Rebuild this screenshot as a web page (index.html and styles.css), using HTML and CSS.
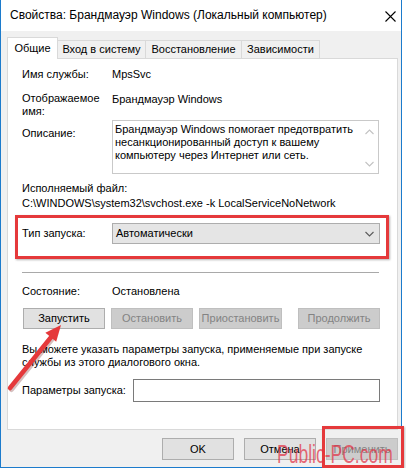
FILE: index.html
```html
<!DOCTYPE html>
<html lang="ru">
<head>
<meta charset="utf-8">
<title>Свойства: Брандмауэр Windows</title>
<link rel="stylesheet" href="styles.css">
</head>
<body>
<div class="stage">
  <div class="window">
    <div class="titlebar">
      <span class="title">Свойства: Брандмауэр Windows (Локальный компьютер)</span>
      <svg class="close" width="11" height="11" viewBox="0 0 11 11"><path d="M0.5 0.5 L10.5 10.5 M10.5 0.5 L0.5 10.5" stroke="#000" stroke-width="1.1" fill="none"/></svg>
    </div>
    <div class="client">
      <div class="tabs">
        <div class="tab active">Общие</div>
        <div class="tab t2">Вход в систему</div>
        <div class="tab t3">Восстановление</div>
        <div class="tab t4">Зависимости</div>
      </div>
      <div class="panel">
        <div class="row r-name">
          <div class="label">Имя службы:</div>
          <div class="value">MpsSvc</div>
        </div>
        <div class="row r-disp">
          <div class="label">Отображаемое<br>имя:</div>
          <div class="value v-disp">Брандмауэр Windows</div>
        </div>
        <div class="row r-desc">
          <div class="label l-desc">Описание:</div>
          <div class="descbox">
            <div class="desctext">Брандмауэр Windows помогает предотвратить<br>несанкционированный доступ к вашему<br>компьютеру через Интернет или сеть.</div>
            <div class="scroll">
              <svg width="9" height="6" viewBox="0 0 9 6"><path d="M0.5 5 L4.5 1 L8.5 5" stroke="#c2c2c2" stroke-width="1.1" fill="none"/></svg>
              <svg width="9" height="6" viewBox="0 0 9 6"><path d="M0.5 1 L4.5 5 L8.5 1" stroke="#c2c2c2" stroke-width="1.1" fill="none"/></svg>
            </div>
          </div>
        </div>
        <div class="exe-label">Исполняемый файл:</div>
        <div class="exe-path">C:\WINDOWS\system32\svchost.exe -k LocalServiceNoNetwork</div>
        <div class="highlight">
          <div class="row r-type">
            <div class="label">Тип запуска:</div>
            <div class="select">
              <span>Автоматически</span>
              <svg width="9" height="6" viewBox="0 0 9 6"><path d="M0.5 1 L4.5 5 L8.5 1" stroke="#5a5a5a" stroke-width="1.1" fill="none"/></svg>
            </div>
          </div>
        </div>
        <div class="sep"></div>
        <div class="row r-state">
          <div class="label">Состояние:</div>
          <div class="value">Остановлена</div>
        </div>
        <div class="btnrow">
          <div class="btn">Запустить</div>
          <div class="btn disabled">Остановить</div>
          <div class="btn disabled wide">Приостановить</div>
          <div class="btn disabled last">Продолжить</div>
        </div>
        <p class="hint">Вы можете указать параметры запуска, применяемые при запуске<br>службы из этого диалогового окна.</p>
        <div class="row r-params">
          <div class="label l-params">Параметры запуска:</div>
          <div class="input"></div>
        </div>
      </div>
      <div class="footer">
        <div class="btn fbtn">OK</div>
        <div class="btn fbtn">Отмена</div>
        <div class="btn fbtn disabled">Применить</div>
      </div>
    </div>
  </div>

  <svg class="arrow" width="406" height="468" viewBox="0 0 406 468">
    <line x1="10" y1="388" x2="52" y2="336" stroke="rgba(90,0,0,0.25)" stroke-width="5" stroke-linecap="round" transform="translate(1.5,1.5)"/>
    <line x1="10" y1="388" x2="52" y2="336" stroke="#e5393b" stroke-width="4.5" stroke-linecap="round"/>
    <polygon points="61,325 45.4,332.8 56.2,341.8" fill="#e5393b"/>
  </svg>
  <div class="applybox"></div>
  <div class="watermark">Public-PC.com</div>
</div>
</body>
</html>
```

FILE: styles.css
```css
html, body {
  margin: 0;
  padding: 0;
  overflow: hidden;
  background: #ffffff;
}

.stage {
  position: relative;
  width: 406px;
  height: 468px;
  font-family: "Liberation Sans", Arial, sans-serif;
  font-size: 11px;
  line-height: 13px;
  color: #000;
}

.window {
  width: 402px;
  height: 468px;
  box-sizing: border-box;
  border: 1px solid #1c7bcc;
  border-top: none;
  background: #f0f0f0;
  display: flex;
  flex-direction: column;
}

.titlebar {
  height: 31px;
  flex: none;
  background: #ffffff;
  display: flex;
  align-items: center;
  justify-content: space-between;
  padding: 0 5px 0 9px;
}

.title {
  font-size: 12px;
  color: #000;
}

.close {
  display: block;
  margin-top: 1px;
}

.client {
  flex: 1;
  padding: 6px 3px 0 6px;
}

.tabs {
  display: flex;
  align-items: flex-end;
  height: 21px;
}

.tab {
  box-sizing: border-box;
  height: 18px;
  border: 1px solid #d9d9d9;
  border-bottom: none;
  background: #f0f0f0;
  text-align: center;
  line-height: 17px;
  margin-left: -1px;
}

.tab.active {
  position: relative;
  z-index: 1;
  height: 22px;
  margin-left: 0;
  margin-bottom: -1px;
  width: 51px;
  background: #ffffff;
  line-height: 20px;
}

.tab.t2 { width: 89px; }
.tab.t3 { width: 97px; }
.tab.t4 { width: 79px; }

.panel {
  box-sizing: border-box;
  width: 391px;
  height: 372px;
  border: 1px solid #d9d9d9;
  background: #ffffff;
  padding: 9px 17px 0 14px;
}

.row {
  display: flex;
}

.label {
  width: 90px;
  flex: none;
}

.r-disp { margin-top: 11px; }
.v-disp { padding-top: 1px; }

.r-desc { margin-top: 2px; }
.l-desc { padding-top: 7px; }

.descbox {
  box-sizing: border-box;
  width: 267px;
  height: 54px;
  border: 1px solid #c9c9c9;
  display: flex;
}

.desctext {
  flex: 1;
  padding: 2px 0 0 2px;
  line-height: 13px;
}

.scroll {
  width: 17px;
  display: flex;
  flex-direction: column;
  justify-content: space-between;
  align-items: center;
  padding: 8px 0 6px;
}

.scroll svg { display: block; }

.exe-label { margin-top: 8px; }
.exe-path { margin-top: 2px; }

.highlight {
  margin: 5px -9px 0 -7px;
  border: 3px solid #e5393b;
  padding: 5px 6px 12px 4px;
  box-shadow: 1px 1px 2px rgba(0, 0, 0, 0.3);
}

.r-type { align-items: center; }

.select {
  box-sizing: border-box;
  width: 268px;
  height: 21px;
  background: #e5e5e5;
  border: 1px solid #adadad;
  display: flex;
  align-items: center;
  justify-content: space-between;
  padding: 0 5px 0 3px;
}

.select svg { display: block; }

.sep {
  margin-top: 13px;
  height: 1px;
  width: 357px;
  background: #a9a9a9;
}

.r-state { margin-top: 12px; }

.btnrow {
  margin-top: 10px;
  display: flex;
  gap: 6px;
  padding-left: 1px;
}

.btn {
  box-sizing: border-box;
  width: 82px;
  height: 21px;
  background: #e1e1e1;
  border: 1px solid #adadad;
  text-align: center;
  line-height: 19px;
}

.btn.wide { width: 83px; }
.btn.last { margin-left: auto; }

.btn.disabled {
  background: #cccccc;
  border-color: #bfbfbf;
  color: #838383;
}

.hint {
  margin: 14px 0 0;
}

.r-params {
  margin-top: 10px;
  align-items: center;
}

.l-params { width: 111px; }

.input {
  box-sizing: border-box;
  width: 247px;
  height: 23px;
  border: 1px solid #7a7a7a;
  background: #ffffff;
}

.footer {
  margin-top: 8px;
  display: flex;
  justify-content: flex-end;
  gap: 10px;
  padding-right: 0;
}

.btn.fbtn {
  width: 72px;
  height: 22px;
  line-height: 20px;
}

.arrow {
  position: absolute;
  left: 0;
  top: 0;
  pointer-events: none;
}

.applybox {
  position: absolute;
  left: 322px;
  top: 426px;
  width: 82px;
  height: 42px;
  box-sizing: border-box;
  border: 3px solid #e5393b;
  box-shadow: 1px 1px 2px rgba(0, 0, 0, 0.25);
}

.watermark {
  position: absolute;
  left: 277px;
  top: 440px;
  font-family: "Liberation Sans", Arial, sans-serif;
  font-size: 25px;
  line-height: 28px;
  color: rgba(226, 50, 70, 0.72);
  transform: scaleX(0.7);
  transform-origin: left top;
  white-space: nowrap;
}
```
